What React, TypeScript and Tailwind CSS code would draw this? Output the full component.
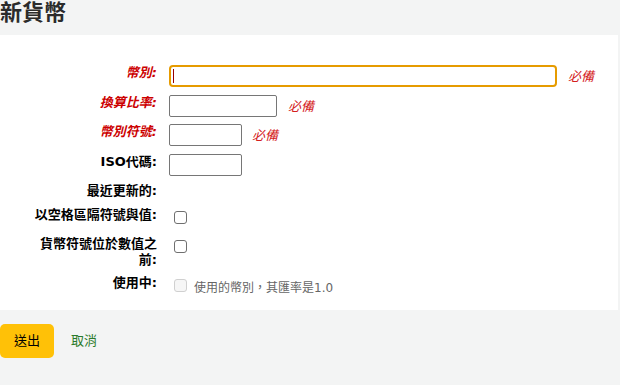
import React from "react";

const font = { fontFamily: '"DejaVu Sans", "Noto Sans CJK TC", sans-serif' };

function Label({ children, required }: { children: React.ReactNode; required?: boolean }) {
  return (
    <div
      className={
        "w-[126px] shrink-0 text-right text-[13px] leading-[16px] font-bold " +
        (required ? "italic text-[#cc0000]" : "text-black")
      }
    >
      {children}
    </div>
  );
}

function Required() {
  return <span className="ml-[11px] mt-[4px] text-[13px] leading-[16px] italic text-[#d42020]">必備</span>;
}

function Box({ checked, disabled }: { checked?: boolean; disabled?: boolean }) {
  return (
    <span
      className={
        "mt-[4px] ml-[5px] block h-[13px] w-[13px] shrink-0 rounded-[3px] border " +
        (disabled ? "border-[#d0d0d0] bg-[#f6f6f6]" : "border-[#6f6f6f] bg-white")
      }
      aria-checked={checked}
    />
  );
}

export default function App() {
  return (
    <div className="min-h-[385px] w-[620px] bg-[#f3f4f4]" style={font}>
      <h1 className="text-[22px] leading-[26px] font-bold text-[#2b2b2b]">新貨幣</h1>

      <div className="mt-[9px] w-[618px] bg-white pt-[30px] pb-[14px]">
        <div className="flex flex-col gap-[7.5px] pl-[31px]">
          <div className="flex items-start gap-[12px]">
            <Label required>幣別:</Label>
            <div className="flex items-start">
              <div className="flex h-[22px] w-[388px] items-center rounded-[4px] border-2 border-[#e69b00] pl-[2px]">
                <span className="block h-[14px] w-px bg-[#990000]" />
              </div>
              <Required />
            </div>
          </div>

          <div className="flex items-start gap-[12px]">
            <Label required>換算比率:</Label>
            <div className="flex items-start">
              <div className="h-[22px] w-[108px] rounded-[2px] border border-[#767676]" />
              <Required />
            </div>
          </div>

          <div className="flex items-start gap-[12px]">
            <Label required>幣別符號:</Label>
            <div className="flex items-start">
              <div className="h-[22px] w-[73px] rounded-[2px] border border-[#767676]" />
              <span className="ml-[10px] mt-[4px] text-[13px] leading-[16px] italic text-[#d42020]">必備</span>
            </div>
          </div>

          <div className="flex items-start gap-[12px]">
            <Label>ISO代碼:</Label>
            <div className="h-[22px] w-[73px] rounded-[2px] border border-[#767676]" />
          </div>

          <div className="flex items-start gap-[12px]">
            <Label>最近更新的:</Label>
          </div>

          <div className="flex items-start gap-[12px]">
            <Label>以空格區隔符號與值:</Label>
            <Box />
          </div>

          <div className="mt-[4.5px] flex items-start gap-[12px]">
            <Label>貨幣符號位於數值之前:</Label>
            <Box />
          </div>

          <div className="flex items-start gap-[12px]">
            <Label>使用中:</Label>
            <div className="flex items-start">
              <Box disabled />
              <span className="ml-[7px] mt-[5px] text-[12px] leading-[16px] text-[#666666]">
                使用的幣別，其匯率是1.0
              </span>
            </div>
          </div>
        </div>
      </div>

      <div className="mt-[14px] flex items-center gap-[17px]">
        <button className="h-[34px] w-[54px] rounded-[5px] bg-[#ffc107] text-[13px] text-black">送出</button>
        <a className="text-[13px] text-[#2a7a2a]" href="#">
          取消
        </a>
      </div>
    </div>
  );
}
